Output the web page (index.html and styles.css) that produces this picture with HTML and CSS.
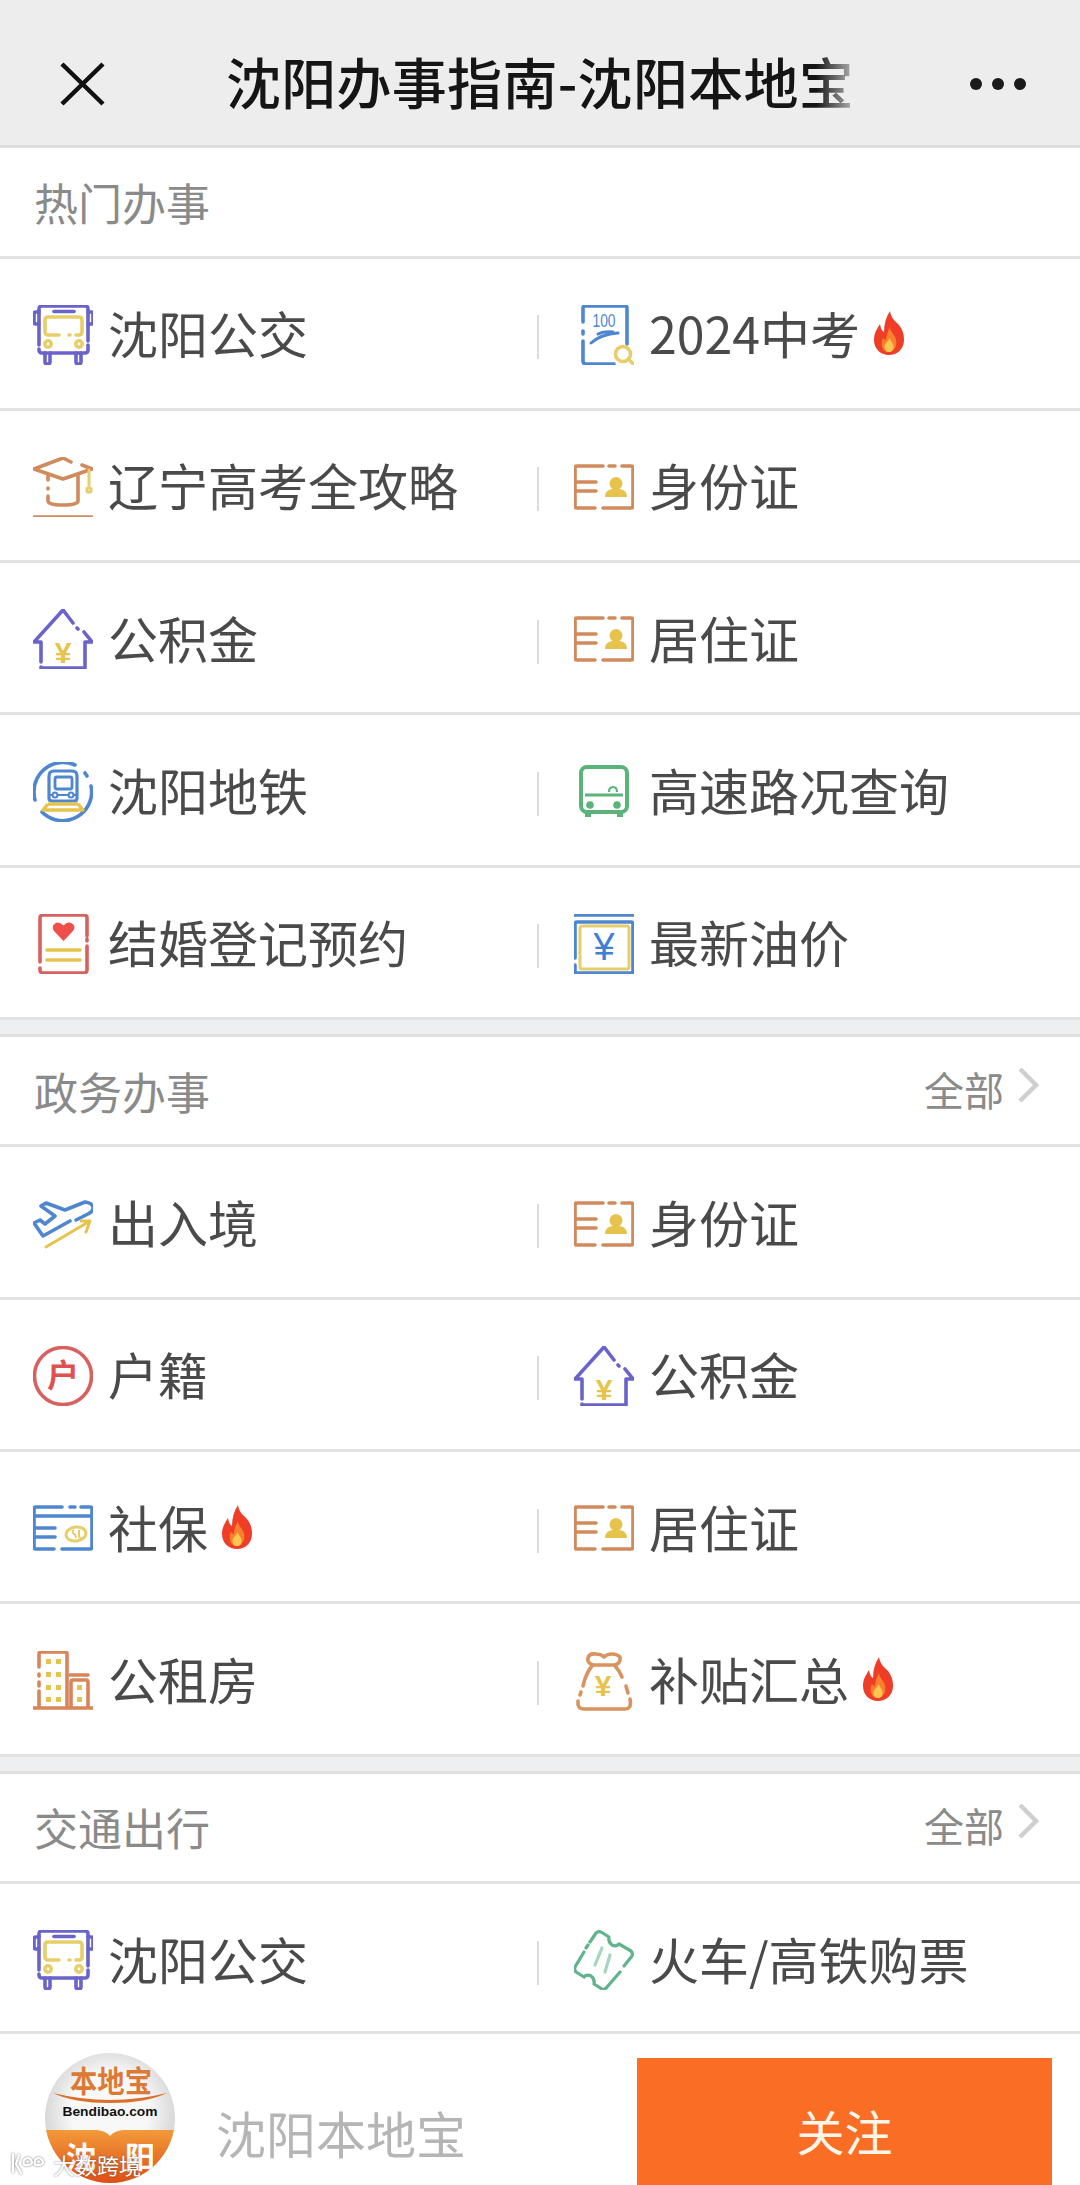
FILE: index.html
```html
<!DOCTYPE html>
<html lang="zh-CN">
<head>
<meta charset="utf-8">
<title>沈阳办事指南-沈阳本地宝</title>
<link rel="stylesheet" href="styles.css">
</head>
<body>
<svg class="sprite" xmlns="http://www.w3.org/2000/svg">
  <symbol id="i-bus" viewBox="0 0 60 60">
    <g fill="none" stroke="#6a63c9" stroke-width="3.600" stroke-linecap="round" stroke-linejoin="round">
      <path d="M6 40V4q0-3 3-3h43q3 0 3 3v32M55 40v5q0 3-3 3H9q-3 0-3-3v-1"/>
      <path d="M6 7H3q-2 0-2 2v8q0 2 2 2h3M55 7h3q2 0 2 2v8q0 2-2 2h-3"/>
      <path d="M12 48v9q0 2 2.500 2t2.500-2v-9M43 48v9q0 2 2.500 2t2.500-2v-9"/>
      <path d="M21 6.500h20"/>
    </g>
    <g fill="none" stroke="#e6cf6b" stroke-width="3.600" stroke-linecap="round">
      <path d="M26 30H15q-3 0-3-3V15q0-3 3-3h31q3 0 3 3v12q0 3-3 3h-3"/>
      <circle cx="15" cy="39" r="3.200"/><circle cx="46" cy="39" r="3.200"/>
      <path d="M36 30h1"/>
    </g>
  </symbol>
  <symbol id="i-cap" viewBox="0 0 60 60">
    <g fill="none" stroke="#d08a5c" stroke-width="3.600" stroke-linecap="round" stroke-linejoin="round">
      <path d="M38 5 30 1 1 12l29 10 29-10-10-4"/>
      <path d="M15 18v5M15 31v1M15 39v5q0 4 15 4t15-4V18"/>
      <path d="M1 60h58"/>
    </g>
    <g fill="none" stroke="#e6cf6b" stroke-width="3" stroke-linecap="round">
      <path d="M56 13v15"/><circle cx="56" cy="33" r="2.200"/>
    </g>
  </symbol>
  <symbol id="i-exam" viewBox="0 0 60 60">
    <g fill="none" stroke="#4f86d0" stroke-width="3.600" stroke-linecap="round">
      <path d="M9 17V3q0-2 2-2h40q2 0 2 2v36M9 26v3M9 36v20q0 3 3 3h28"/>
      <path d="M24 29q6-3 15-2M17 38q10-9 27-10" stroke-width="3"/>
    </g>
    <text class="ic-txt" x="30" y="22" text-anchor="middle" font-size="19" textLength="23" lengthAdjust="spacingAndGlyphs" fill="#4f86d0">100</text>
    <g fill="none" stroke="#e6cf6b" stroke-width="3.600" stroke-linecap="round">
      <circle cx="49" cy="49" r="7.500"/><path d="M54.500 54.500 60 59.500"/>
    </g>
  </symbol>
  <symbol id="i-id" viewBox="0 0 60 60">
    <g fill="none" stroke="#d08a5c" stroke-width="3.600" stroke-linecap="round" stroke-linejoin="round">
      <path d="M29 9H3q-2 0-2 2v38q0 2 2 2h18M29 51h28q2 0 2-2V11q0-2-2-2h-9M35 9h6"/>
      <path d="M2 25h20M2 34h20"/>
    </g>
    <circle cx="42" cy="26.500" r="6.500" fill="#e6c34d"/>
    <path d="M31 40q0-7 7-8h8q7 1 7 8z" fill="#e6c34d"/>
  </symbol>
  <symbol id="i-house" viewBox="0 0 60 60">
    <g fill="none" stroke="#6a63c9" stroke-width="3.600" stroke-linecap="round" stroke-linejoin="round">
      <path d="M40 14 30 1 1 33h7v20M8 58v1h44V33h7l-8-10M45 20l-1-1"/>
    </g>
    <text class="ic-txt ic-heavy" x="30" y="54" text-anchor="middle" font-size="30" fill="#e6c34d">¥</text>
  </symbol>
  <symbol id="i-metro" viewBox="0 0 60 60">
    <g fill="none" stroke="#4f86d0" stroke-width="3.600" stroke-linecap="round" stroke-linejoin="round">
      <path d="M42 3A29 29 0 0 0 1 30q0 5 1 8M9 50a29 29 0 0 0 49-14 29 29 0 0 0 0-12M52 11l2 3"/>
      <path d="M16 36V14q0-5 5-5h18q5 0 5 5v22q0 3-3 3H19q-3 0-3-3z" stroke-width="3.200"/>
      <rect x="22" y="15" width="17" height="12" rx="2" stroke-width="2.800"/>
      <path d="M24.500 33h11M16 33h3.500M40.500 33H44" stroke-width="2"/>
      <circle cx="22" cy="33" r="2.500" stroke-width="2"/><circle cx="38" cy="33" r="2.500" stroke-width="2"/>
    </g>
    <path d="M15 42h30M15 42l-5 6h40l-5-6" fill="none" stroke="#e6c34d" stroke-width="3.400" stroke-linejoin="round"/>
  </symbol>
  <symbol id="i-gbus" viewBox="0 0 60 60">
    <g fill="none" stroke="#5ab47a" stroke-width="4" stroke-linejoin="round">
      <rect x="7" y="5" width="46" height="45" rx="6"/>
      <path d="M11 33h38" stroke-width="2.800"/>
      <path d="M35 30q0-5 4-5t4 5" stroke-width="2.200"/>
      <path d="M11 53h6M43 53h6"/>
    </g>
    <circle cx="16" cy="43" r="3.800" fill="#5ab47a"/><circle cx="43" cy="43" r="3.800" fill="#5ab47a"/>
  </symbol>
  <symbol id="i-love" viewBox="0 0 60 60">
    <path d="M54 22V4q0-3-3-3H10Q7 1 7 4v44M7 54v2q0 3 3 3h41q3 0 3-3V32M54 25v2" fill="none" stroke="#d8605f" stroke-width="3.600" stroke-linecap="round"/>
    <path d="M30.500 27 21 17q-3-5 1-7.500t8.500 2q4-4.500 8.500-2t1 7.500z" fill="#ef4e4a"/>
    <path d="M14 36h33M14 46h33" stroke="#e6c34d" stroke-width="3.600" stroke-linecap="round"/>
  </symbol>
  <symbol id="i-oil" viewBox="0 0 60 60">
    <path d="M0 1h60" stroke="#4f86d0" stroke-width="3.600"/>
    <path d="M1 44V10q0-2 2-2h54q2 0 2 2v47q0 2-2 2H3q-2 0-2-2v-6" fill="none" stroke="#4f86d0" stroke-width="3.600" stroke-linecap="round"/>
    <rect x="6" y="12" width="49" height="43" rx="2" fill="none" stroke="#e6cf6b" stroke-width="3"/>
    <text class="ic-txt" x="30" y="46" text-anchor="middle" font-size="38" fill="#3f7fd6">¥</text>
  </symbol>
  <symbol id="i-plane" viewBox="0 0 60 60">
    <path d="M37 27 10 42 1 29l6-3 5 4 10-8-14-10 5-3 19 7 20-8q7 1 8 5t-5 7l-12 6" fill="none" stroke="#4f86d0" stroke-width="3.600" stroke-linecap="round" stroke-linejoin="round"/>
    <path d="M13 53 57 27M48 27l9 0-4 11" fill="none" stroke="#e6c34d" stroke-width="3" stroke-linecap="round" stroke-linejoin="round"/>
  </symbol>
  <symbol id="i-hukou" viewBox="0 0 60 60">
    <circle cx="30" cy="30" r="28.500" fill="none" stroke="#d8605f" stroke-width="3.600"/>
    <text class="ic-txt ic-bold" x="30" y="41" text-anchor="middle" font-size="32" fill="#e05050">户</text>
  </symbol>
  <symbol id="i-social" viewBox="0 0 60 60">
    <g fill="none" stroke="#4f86d0" stroke-width="3.600" stroke-linecap="round" stroke-linejoin="round">
      <path d="M29 9H3q-2 0-2 2v38q0 2 2 2h18M29 51h28q2 0 2-2V11q0-2-2-2h-9M37 9h5"/>
      <path d="M2 18h56M2 30h20M2 39h20"/>
    </g>
    <ellipse cx="43" cy="36" rx="10" ry="7" fill="none" stroke="#e6cf6b" stroke-width="3" transform="rotate(-8 43 36)"/>
    <path d="M41 32q-3 2 0 4t1 4M46 32v6q0 2 2 2" fill="none" stroke="#e6cf6b" stroke-width="2"/>
  </symbol>
  <symbol id="i-build" viewBox="0 0 60 60">
    <g fill="none" stroke="#d9855a" stroke-width="3.600" stroke-linecap="round">
      <path d="M0 57h60"/>
      <path d="M6 16V3q0-2 2-2h24q2 0 2 2v54M6 23v2M6 31v4M6 40v16"/>
      <path d="M38 56V31q0-2 2-2h13q2 0 2 2v25M37 24h18"/>
    </g>
    <g fill="#e6c34d">
      <rect x="13" y="8" width="5" height="5"/><rect x="23" y="8" width="5" height="5"/>
      <rect x="13" y="21" width="5" height="5"/><rect x="23" y="21" width="5" height="5"/>
      <rect x="13" y="34" width="5" height="5"/><rect x="23" y="34" width="5" height="5"/>
      <rect x="13" y="46" width="5" height="5"/><rect x="23" y="46" width="5" height="5"/>
      <rect x="44" y="34" width="5" height="5"/><rect x="44" y="46" width="5" height="5"/>
    </g>
  </symbol>
  <symbol id="i-bag" viewBox="0 0 60 60">
    <g fill="none" stroke="#d9935f" stroke-width="3.600" stroke-linecap="round" stroke-linejoin="round">
      <path d="M19 14q-6-2-5-7t8-4q5 0 8 3 3-3 8-3t8 3q1 6-5 8z"/>
      <path d="M18 15Q12 22 9 35M7 41l-1 3M4 50q-1 8 6 8h41q7 0 5-10M54 42l-2-7M48 26q-3-7-7-11"/>
    </g>
    <text class="ic-txt ic-heavy" x="29" y="45" text-anchor="middle" font-size="30" fill="#e6c34d">¥</text>
  </symbol>
  <symbol id="i-ticket" viewBox="0 0 60 60">
    <g fill="none" stroke="#5fb48c" stroke-width="3.200" stroke-linecap="round" stroke-linejoin="round">
      <path d="M22 3q2-2 5-1l8 5q-1 5 3 8 4 2 7-1l12 7q2 2 1 5L50 36M46 42 33 57q-2 3-5 2l-8-5q1-5-3-8-4-2-7 1l-8-5q-2-2-1-5L10 22M12 18l2-3M16 12l6-9"/>
      <path d="M28 18 21 35M36 25 31 42" stroke="#a5d6bd"/>
    </g>
  </symbol>
  <symbol id="i-fire" viewBox="0 0 30 44">
    <path d="M16 0c1 7 5 10 9 14 4 5 5 10 5 15 0 9-7 15-15 15S0 38 0 29c0-7 3-11 6-16 1 5 2 7 4 8 0-8 2-15 6-21z" fill="#ef3d27"/>
    <path d="M16 16c0 4 3 6 5 10 3 5 1 15-6 15S6 33 9 27c1 1 2 2 3 2 0-5 2-9 4-13z" fill="#f9802c"/>
    <path d="M15.500 27c1 3 4 5 4 9 0 3-2 5-4.500 5s-4.500-2-4.500-5c0-4 4-5 5-9z" fill="#fcc652"/>
  </symbol>
</svg>

<div class="page">
  <header class="topbar">
    <div class="topbar-side">
      <svg class="close-ic" viewBox="0 0 45 44"><path d="M2 2 43 42M43 2 2 42" fill="none" stroke="#111" stroke-width="4.500"/></svg>
    </div>
    <h1 class="topbar-title">沈阳办事指南-沈阳本地宝</h1>
    <div class="topbar-side topbar-side-end">
      <span class="dot"></span><span class="dot"></span><span class="dot"></span>
    </div>
  </header>

  <main class="content">
    <section class="group">
      <div class="group-head"><h2 class="group-title">热门办事</h2></div>
      <div class="row">
        <a class="item"><svg class="ic"><use href="#i-bus"/></svg><span>沈阳公交</span></a><i class="sep"></i>
        <a class="item"><svg class="ic"><use href="#i-exam"/></svg><span class="num">2024中考</span><svg class="fire"><use href="#i-fire"/></svg></a>
      </div>
      <div class="row">
        <a class="item"><svg class="ic"><use href="#i-cap"/></svg><span>辽宁高考全攻略</span></a><i class="sep"></i>
        <a class="item"><svg class="ic"><use href="#i-id"/></svg><span>身份证</span></a>
      </div>
      <div class="row">
        <a class="item"><svg class="ic"><use href="#i-house"/></svg><span>公积金</span></a><i class="sep"></i>
        <a class="item"><svg class="ic"><use href="#i-id"/></svg><span>居住证</span></a>
      </div>
      <div class="row">
        <a class="item"><svg class="ic"><use href="#i-metro"/></svg><span>沈阳地铁</span></a><i class="sep"></i>
        <a class="item"><svg class="ic"><use href="#i-gbus"/></svg><span>高速路况查询</span></a>
      </div>
      <div class="row">
        <a class="item"><svg class="ic"><use href="#i-love"/></svg><span>结婚登记预约</span></a><i class="sep"></i>
        <a class="item"><svg class="ic"><use href="#i-oil"/></svg><span>最新油价</span></a>
      </div>
    </section>

    <section class="group group-next">
      <div class="group-head"><h2 class="group-title">政务办事</h2><a class="more">全部<svg class="chev" viewBox="0 0 22 36"><path d="M3 2 19 18 3 34" fill="none" stroke="#cfcfcf" stroke-width="4.500"/></svg></a></div>
      <div class="row">
        <a class="item"><svg class="ic"><use href="#i-plane"/></svg><span>出入境</span></a><i class="sep"></i>
        <a class="item"><svg class="ic"><use href="#i-id"/></svg><span>身份证</span></a>
      </div>
      <div class="row">
        <a class="item"><svg class="ic"><use href="#i-hukou"/></svg><span>户籍</span></a><i class="sep"></i>
        <a class="item"><svg class="ic"><use href="#i-house"/></svg><span>公积金</span></a>
      </div>
      <div class="row">
        <a class="item"><svg class="ic"><use href="#i-social"/></svg><span>社保</span><svg class="fire"><use href="#i-fire"/></svg></a><i class="sep"></i>
        <a class="item"><svg class="ic"><use href="#i-id"/></svg><span>居住证</span></a>
      </div>
      <div class="row">
        <a class="item"><svg class="ic"><use href="#i-build"/></svg><span>公租房</span></a><i class="sep"></i>
        <a class="item"><svg class="ic"><use href="#i-bag"/></svg><span>补贴汇总</span><svg class="fire"><use href="#i-fire"/></svg></a>
      </div>
    </section>

    <section class="group group-next">
      <div class="group-head"><h2 class="group-title">交通出行</h2><a class="more">全部<svg class="chev" viewBox="0 0 22 36"><path d="M3 2 19 18 3 34" fill="none" stroke="#cfcfcf" stroke-width="4.500"/></svg></a></div>
      <div class="row">
        <a class="item"><svg class="ic"><use href="#i-bus"/></svg><span>沈阳公交</span></a><i class="sep"></i>
        <a class="item"><svg class="ic"><use href="#i-ticket"/></svg><span>火车/高铁购票</span></a>
      </div>
    </section>
  </main>

  <footer class="bar">
    <svg class="logo" viewBox="0 0 130 130">
      <defs>
        <clipPath id="logo-clip"><circle cx="65" cy="65" r="65"/></clipPath>
        <radialGradient id="logo-bg" cx="0.5" cy="0.45" r="0.6"><stop offset="0.5" stop-color="#f8f8f8"/><stop offset="1" stop-color="#c9c9c9"/></radialGradient>
        <linearGradient id="logo-or" x1="0" y1="0" x2="0" y2="1"><stop offset="0" stop-color="#f29a3a"/><stop offset="1" stop-color="#df4f17"/></linearGradient>
      </defs>
      <g clip-path="url(#logo-clip)">
        <rect width="130" height="130" fill="url(#logo-bg)"/>
        <text class="logo-cn" x="66" y="39" text-anchor="middle" font-size="30" textLength="82" lengthAdjust="spacingAndGlyphs" fill="#dc7a35">本地宝</text>
        <path d="M8 40q57 14 114 0-20 10-57 10T8 40z" fill="#dc6f2a"/>
        <text class="logo-en" x="65" y="63" text-anchor="middle" font-size="13" textLength="95" lengthAdjust="spacingAndGlyphs" fill="#111">Bendibao.com</text>
        <path d="M0 77h52q9 1 13 6 4-5 13-6h52v53H0z" fill="url(#logo-or)"/>
        <text class="logo-cn" x="36" y="115" text-anchor="middle" font-size="30" fill="#fff">沈</text>
        <text class="logo-cn" x="95" y="115" text-anchor="middle" font-size="30" fill="#fff">阳</text>
      </g>
    </svg>
    <span class="bar-name">沈阳本地宝</span>
    <a class="follow">关注</a>
  </footer>

  <div class="watermark">
    <svg class="wm-ic" viewBox="0 0 38 24"><path d="M3 2v18M9 3 6 12l5 9M14 8q4-4 7 0t-3 5-4-5M25 8q4-4 7 0t-3 5-4-5" fill="none" stroke="#fff" stroke-width="2.200" stroke-linecap="round"/></svg>
    <span class="wm-text">大数跨境</span>
  </div>
</div>
</body>
</html>
```
FILE: styles.css
```css
* { box-sizing: border-box; }
html, body { margin: 0; padding: 0; }
body {
  width: 1080px;
  height: 2185px;
  overflow: hidden;
  background: #fff;
  font-family: "Noto Sans CJK SC", "Noto Sans", sans-serif;
  color: #4a4a4a;
}
.sprite { display: none; }
.page {
  position: relative;
  height: 2185px;
  display: flex;
  flex-direction: column;
  background: #eeeff1;
}

/* top bar */
.topbar {
  flex: none;
  height: 148px;
  padding-top: 22px;
  display: grid;
  grid-template-columns: 1fr auto 1fr;
  align-items: center;
  background: #ededed;
  border-bottom: 3px solid #dedede;
}
.topbar-side { display: flex; align-items: center; padding-left: 60px; }
.topbar-side-end { justify-content: flex-end; gap: 10px; padding: 0 54px 0 0; }
.close-ic { width: 45px; height: 44px; }
.dot { width: 12px; height: 12px; border-radius: 50%; background: #1a1a1a; }
.topbar-title {
  margin: 0 0 8px;
  font-size: 55px;
  line-height: 70px;
  font-weight: 500;
  letter-spacing: 0.3px;
  color: #151515;
  white-space: nowrap;
  -webkit-mask-image: linear-gradient(to right, #000 94%, rgba(0,0,0,.25) 100%);
  mask-image: linear-gradient(to right, #000 94%, rgba(0,0,0,.25) 100%);
}

/* list */
.content { flex: 1; min-height: 0; overflow: hidden; }
.group { background: #fff; }
.group-next { margin-top: 14px; border-top: 3px solid #e0e0e0; }
.group-head {
  height: 110.5px;
  padding: 0 41px 0 34px;
  display: flex;
  align-items: center;
  justify-content: space-between;
  border-bottom: 3px solid #e2e2e2;
}
.group-title { margin: 0; font-size: 44px; line-height: 60px; font-weight: 400; color: #8a8a8a; }
.more { display: flex; align-items: center; font-size: 40px; line-height: 50px; color: #8a8a8a; padding-bottom: 4px; }
.chev { width: 22px; height: 36px; margin: -8px 0 0 13px; }

.row {
  height: 152.3px;
  display: grid;
  grid-template-columns: 537px 2px 1fr;
  align-items: center;
  border-bottom: 3px solid #e2e2e2;
}
.sep { height: 44px; margin-top: 8px; background: #dcdcdc; }
.item {
  display: flex;
  align-items: center;
  padding-left: 33px;
  font-size: 50px;
  line-height: 70px;
  color: #4a4a4a;
  white-space: nowrap;
}
.sep + .item { padding-left: 35px; }
.item > span { margin-left: 15px; padding-bottom: 2px; }
.ic { width: 60px; height: 60px; flex: none; overflow: visible; margin-top: 3px; }
.fire { width: 30px; height: 44px; flex: none; margin-left: 14px; }
.ic-txt { font-family: "Liberation Sans", sans-serif; }
.ic-heavy { font-weight: 700; }
.ic-bold { font-family: "Noto Sans CJK SC", sans-serif; font-weight: 700; }

/* bottom bar */
.bar {
  flex: none;
  height: 154px;
  display: flex;
  align-items: flex-start;
  overflow: hidden;
  padding-left: 45px;
  background: #fff;
  border-top: 3px solid #e2e2e2;
}
.logo { flex: none; width: 130px; height: 130px; margin-top: 19px; }
.logo-cn { font-family: "Noto Sans CJK SC", sans-serif; font-weight: 700; }
.logo-en { font-family: "Liberation Sans", sans-serif; font-weight: 700; }
.bar-name { margin: 63px 0 0 41px; font-size: 50px; line-height: 70px; color: #b5b5b5; }
.follow {
  margin: 24px 28px 0 auto;
  flex: none;
  width: 415px;
  height: 144px;
  display: flex;
  align-items: center;
  justify-content: center;
  font-size: 48px;
  background: #f96d24;
  color: #fff6ea;
}

/* watermark */
.watermark {
  position: absolute;
  left: 10px;
  bottom: 8px;
  display: flex;
  align-items: center;
  gap: 5px;
  color: #fff;
}
.wm-ic { width: 38px; height: 24px; filter: drop-shadow(0 0 1px #777); }
.wm-text { font-size: 22px; line-height: 26px; text-shadow: 0 0 2px rgba(60,60,60,.7); }
```
